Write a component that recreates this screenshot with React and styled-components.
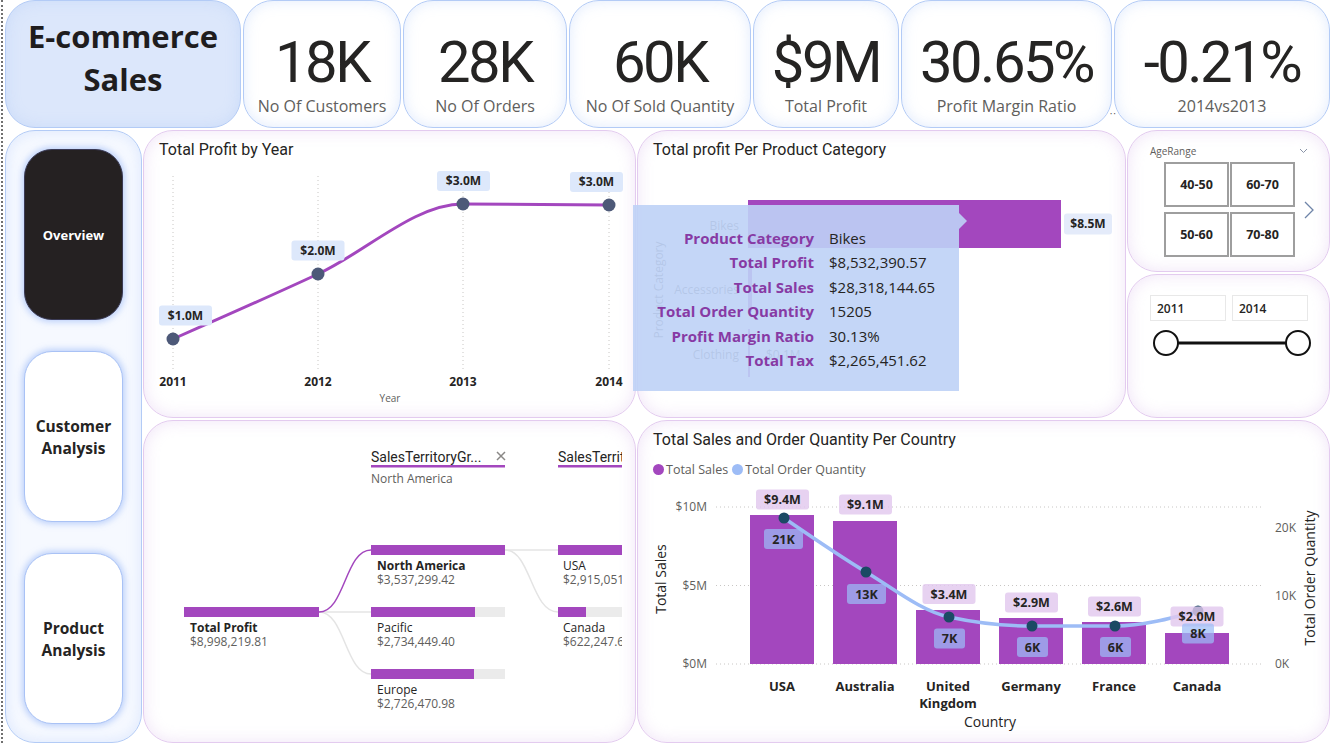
import React from "react";
import styled, { createGlobalStyle, css } from "styled-components";

const SEGOE = `"Open Sans", "Noto Sans", "Liberation Sans", sans-serif`;
const DIN = `Roboto, "Liberation Sans", sans-serif`;
const PURPLE = "#a347be";
const INK = "#252423";
const GRAY = "#605e5c";

const GlobalStyle = createGlobalStyle`
  html, body { margin: 0; padding: 0; background: #fff; }
  body { font-family: ${SEGOE}; color: ${INK}; overflow: hidden; }
  * { box-sizing: border-box; }
`;

const Page = styled.div`
  width: 1329px;
  height: 743px;
  margin-left: 1px;
  border-left: 2px dotted #707070;
  padding-left: 2px;
  display: flex;
  flex-direction: column;
  gap: 2px;
`;

const TopRow = styled.div`
  display: flex;
  gap: 2px;
  height: 128px;
`;

const blueCard = css`
  border: 1px solid #b3cbf6;
  border-radius: 30px;
  box-shadow: inset 0 0 14px rgba(170, 198, 248, 0.35);
`;

const TitleCard = styled.div`
  ${blueCard};
  width: 236px;
  background: #dce7fb;
  padding-top: 14px;
  text-align: center;
  font-family: ${SEGOE};
  font-weight: 700;
  font-size: 31px;
  line-height: 43px;
  color: #1f1d1e;
`;

const KpiCard = styled.div`
  ${blueCard};
  position: relative;
  width: ${(p) => p.$w}px;
  background: #fff;
  display: flex;
  flex-direction: column;
  align-items: center;
  padding-top: 32px;
  gap: 5px;
`;

const KpiValue = styled.div`
  font-family: ${DIN};
  font-size: 58px;
  line-height: 58px;
  letter-spacing: -2.5px;
  color: ${INK};
  white-space: nowrap;
`;

const KpiLabel = styled.div`
  font-family: ${SEGOE};
  font-size: 16px;
  line-height: 20px;
  color: ${GRAY};
  white-space: nowrap;
`;

const MoreDots = styled.span`
  position: absolute;
  right: -6px;
  bottom: 9px;
  font-size: 10px;
  line-height: 10px;
  letter-spacing: 1px;
  color: #605e5c;
`;

const Main = styled.div`
  display: grid;
  grid-template-columns: 137px 493px 489px 203px;
  grid-template-rows: 288px 323px;
  column-gap: 1px;
  row-gap: 2px;
`;

const NavPanel = styled.nav`
  ${blueCard};
  grid-column: 1;
  grid-row: 1 / 3;
  background: #f6f9ff;
  padding: 18px 0 0 18px;
  display: flex;
  flex-direction: column;
  gap: 31px;
`;

const NavButton = styled.div`
  width: 99px;
  height: 171px;
  border-radius: 28px;
  border: 1px solid ${(p) => (p.$active ? "#3a3a55" : "#a9c2f5")};
  background: ${(p) => (p.$active ? "#252122" : "#fff")};
  color: ${(p) => (p.$active ? "#fff" : INK)};
  box-shadow: 0 0 6px 2px rgba(140, 175, 245, 0.55);
  display: flex;
  align-items: center;
  justify-content: center;
  text-align: center;
  font-weight: 700;
  font-size: ${(p) => (p.$active ? 13 : 15.5)}px;
  line-height: 22px;
`;

const PinkCard = styled.section`
  position: relative;
  grid-column: ${(p) => p.$col};
  grid-row: ${(p) => p.$row};
  border: 1px solid #e3cbef;
  border-radius: 30px;
  background: #fff;
  box-shadow: inset 0 0 16px rgba(222, 196, 238, 0.45);
  display: flex;
  flex-direction: column;
  overflow: ${(p) => (p.$clip ? "hidden" : "visible")};
`;

const SideStack = styled.div`
  grid-column: 4;
  grid-row: 1;
  display: flex;
  flex-direction: column;
  gap: 2px;
`;

const SlicerCard = styled(PinkCard)`
  height: ${(p) => p.$h}px;
  flex: none;
`;

const ChartTitle = styled.h2`
  margin: 9px 0 0 15px;
  height: 20px;
  font-family: ${DIN};
  font-weight: 400;
  font-size: 16px;
  line-height: 20px;
  color: ${INK};
  white-space: nowrap;
`;

const ChartSvg = styled.svg`
  display: block;
  flex: none;
  font-family: ${SEGOE};
`;

const Legend = styled.div`
  margin: 10px 0 0 15px;
  height: 18px;
  display: flex;
  align-items: center;
  gap: 4px;
  font-size: 12.5px;
  color: ${GRAY};
`;

const LegendItem = styled.span`
  display: inline-flex;
  align-items: center;
  gap: 2px;
  &::before {
    content: "";
    width: 11px;
    height: 11px;
    border-radius: 50%;
    background: ${(p) => p.$color};
  }
`;

const Tooltip = styled.div`
  position: absolute;
  left: -5px;
  top: 74px;
  width: 326px;
  height: 186px;
  background: rgba(190, 210, 246, 0.9);
  display: grid;
  grid-template-columns: 181px 1fr;
  column-gap: 15px;
  align-content: start;
  padding-top: 21px;
  font-size: 15px;
  line-height: 24.4px;
  z-index: 3;
  &::after {
    content: "";
    position: absolute;
    right: -8px;
    top: 8px;
    border-style: solid;
    border-width: 8px 0 8px 8px;
    border-color: transparent transparent transparent rgba(190, 210, 246, 0.9);
  }
`;

const TipLabel = styled.div`
  text-align: right;
  font-weight: 700;
  color: #873aa4;
  white-space: nowrap;
`;

const TipValue = styled.div`
  color: ${INK};
  white-space: nowrap;
`;

const SlicerHead = styled.div`
  margin: 13px 21px 0 22px;
  height: 14px;
  display: flex;
  justify-content: space-between;
  align-items: center;
  font-size: 10px;
  line-height: 14px;
  color: ${GRAY};
`;

const SlicerBody = styled.div`
  margin: 4px 0 0 36px;
  display: flex;
  align-items: center;
  gap: 9px;
`;

const TileGrid = styled.div`
  display: grid;
  grid-template-columns: 65px 65px;
  grid-auto-rows: 45px;
  column-gap: 1px;
  row-gap: 5px;
`;

const Tile = styled.div`
  border: 2px solid #9e9e9e;
  background: #fff;
  display: flex;
  align-items: center;
  justify-content: center;
  font-weight: 700;
  font-size: 12.5px;
  color: ${INK};
`;

const RangeInputs = styled.div`
  margin: 20px 0 0 22px;
  display: flex;
  gap: 6px;
`;

const RangeBox = styled.div`
  width: 76px;
  height: 26px;
  border: 1px solid #e8e8e8;
  padding-left: 6px;
  display: flex;
  align-items: center;
  font-size: 12px;
  font-weight: 600;
  color: ${INK};
`;

const SliderSvg = styled.svg`
  display: block;
  margin: 8px 0 0 24px;
`;

function monotone(pts) {
  const n = pts.length;
  const h = [];
  const s = [];
  for (let i = 0; i < n - 1; i++) {
    h[i] = pts[i + 1][0] - pts[i][0];
    s[i] = (pts[i + 1][1] - pts[i][1]) / h[i];
  }
  const t = new Array(n).fill(0);
  for (let i = 1; i < n - 1; i++) {
    const s0 = s[i - 1];
    const s1 = s[i];
    const p = (s0 * h[i] + s1 * h[i - 1]) / (h[i - 1] + h[i]);
    t[i] = (Math.sign(s0) + Math.sign(s1)) * Math.min(Math.abs(s0), Math.abs(s1), 0.5 * Math.abs(p)) || 0;
  }
  t[0] = (3 * s[0] - t[1]) / 2;
  t[n - 1] = (3 * s[n - 2] - t[n - 2]) / 2;
  let d = `M${pts[0][0]},${pts[0][1]}`;
  for (let i = 0; i < n - 1; i++) {
    const [x0, y0] = pts[i];
    const [x1, y1] = pts[i + 1];
    const dx = h[i] / 3;
    d += ` C${x0 + dx},${y0 + t[i] * dx} ${x1 - dx},${y1 - t[i + 1] * dx} ${x1},${y1}`;
  }
  return d;
}

function DataLabel({ cx, cy, w, h = 20, text, fill, size = 12 }) {
  return (
    <g>
      <rect x={cx - w / 2} y={cy - h / 2} width={w} height={h} rx={3} fill={fill} />
      <text x={cx} y={cy + size * 0.36} textAnchor="middle" fontSize={size} fontWeight={700} fill={INK}>
        {text}
      </text>
    </g>
  );
}

function ProfitByYear() {
  const pts = [
    [173, 339],
    [318, 274],
    [463, 204],
    [609, 205],
  ];
  const labels = [
    { cx: 185.5, cy: 315.5, t: "$1.0M" },
    { cx: 318, cy: 250.5, t: "$2.0M" },
    { cx: 463.5, cy: 181, t: "$3.0M" },
    { cx: 596.5, cy: 182, t: "$3.0M" },
  ];
  const years = ["2011", "2012", "2013", "2014"];
  return (
    <ChartSvg width={491} height={257} viewBox="144 160 491 257">
      {pts.map(([x]) => (
        <line key={x} x1={x} x2={x} y1={176} y2={372} stroke="#c8c6c4" strokeDasharray="1 3" />
      ))}
      <path d={monotone(pts)} fill="none" stroke={PURPLE} strokeWidth={3} />
      {pts.map(([x, y]) => (
        <circle key={x} cx={x} cy={y} r={6.5} fill="#4d5978" />
      ))}
      {labels.map((l) => (
        <DataLabel key={l.cx} cx={l.cx} cy={l.cy} w={53} text={l.t} fill="#dde8fb" />
      ))}
      {pts.map(([x], i) => (
        <text key={x} x={x} y={386} textAnchor="middle" fontSize={12} fontWeight={700} fill={INK}>
          {years[i]}
        </text>
      ))}
      <text x={390} y={402} textAnchor="middle" fontSize={10} fill={GRAY}>
        Year
      </text>
    </ChartSvg>
  );
}

function ProfitByCategory() {
  return (
    <ChartSvg width={487} height={257} viewBox="638 160 487 257">
      <rect x={748} y={200} width={313} height={48} fill={PURPLE} />
      <rect x={748} y={264} width={4} height={48} fill={PURPLE} />
      <rect x={748} y={329} width={2} height={48} fill={PURPLE} />
      <text x={739} y={230} textAnchor="end" fontSize={12} fill={GRAY}>Bikes</text>
      <text x={739} y={294} textAnchor="end" fontSize={12} fill={GRAY}>Accessories</text>
      <text x={739} y={359} textAnchor="end" fontSize={12} fill={GRAY}>Clothing</text>
      <text x={766} y={359} fontSize={12} fill={GRAY}>$0.1M</text>
      <text x={663} y={290} transform="rotate(-90 663 290)" textAnchor="middle" fontSize={12} fill={GRAY}>
        Product Category
      </text>
      <DataLabel cx={1088} cy={224} w={48} h={21} text="$8.5M" fill="#e4ebfa" />
    </ChartSvg>
  );
}

function DecompTree() {
  const bar = (x, y, full, fillW, key) => (
    <g key={key}>
      <rect x={x} y={y} width={full} height={10} fill="#ebebeb" />
      <rect x={x} y={y} width={fillW} height={10} fill={PURPLE} />
    </g>
  );
  const node = (x, y, name, val, bold) => (
    <g key={name}>
      <text x={x} y={y} fontSize={12} fontWeight={bold ? 700 : 400} fill={INK}>{name}</text>
      <text x={x} y={y + 13.7} fontSize={12} fill={GRAY}>{val}</text>
    </g>
  );
  return (
    <ChartSvg width={491} height={321} viewBox="144 421 491 321">
      <defs>
        <clipPath id="treeClip">
          <rect x={144} y={421} width={478} height={321} />
        </clipPath>
      </defs>
      <g clipPath="url(#treeClip)">
        <path d="M319 612 L371 612" stroke="#e4e4e4" strokeWidth={1.5} fill="none" />
        <path d="M319 612 C345 612 345 674 371 674" stroke="#e4e4e4" strokeWidth={1.5} fill="none" />
        <path d="M319 612 C345 612 345 550 371 550" stroke={PURPLE} strokeWidth={1.5} fill="none" />
        <path d="M505 550 L558 550" stroke="#e4e4e4" strokeWidth={1.5} fill="none" />
        <path d="M505 550 C531 550 531 612 558 612" stroke="#e4e4e4" strokeWidth={1.5} fill="none" />

        {bar(184, 607, 135, 135, "root")}
        {node(190, 632, "Total Profit", "$8,998,219.81", true)}

        <text x={371} y={462} fontSize={14} fontFamily={DIN} fill={INK}>SalesTerritoryGr...</text>
        <path d="M497 452 L505 460 M505 452 L497 460" stroke="#8a8886" strokeWidth={1.5} />
        <rect x={371} y={465} width={134} height={2.5} fill={PURPLE} />
        <text x={371} y={483} fontSize={12} fill={GRAY}>North America</text>

        {bar(371, 545, 134, 134, "na")}
        {node(377, 570, "North America", "$3,537,299.42", true)}
        {bar(371, 607, 134, 104, "pa")}
        {node(377, 632, "Pacific", "$2,734,449.40")}
        {bar(371, 669, 134, 103, "eu")}
        {node(377, 694, "Europe", "$2,726,470.98")}

        <text x={558} y={462} fontSize={14} fontFamily={DIN} fill={INK}>SalesTerritoryCountry</text>
        <rect x={558} y={465} width={134} height={2.5} fill={PURPLE} />
        {bar(558, 545, 134, 134, "us")}
        {node(563, 570, "USA", "$2,915,051.78")}
        {bar(558, 607, 134, 28, "ca")}
        {node(563, 632, "Canada", "$622,247.64")}
      </g>
    </ChartSvg>
  );
}

const countries = [
  { n: ["USA"], x: 750, top: 515, s: "$9.4M", sx: 782.5, sy: 499.5, q: "21K", qx: 783.5, qy: 539, qw: 39, p: [784, 518] },
  { n: ["Australia"], x: 833, top: 521, s: "$9.1M", sx: 865.5, sy: 504.5, q: "13K", qx: 866.5, qy: 594, qw: 39, p: [866, 572] },
  { n: ["United", "Kingdom"], x: 916, top: 610, s: "$3.4M", sx: 949, sy: 594, q: "7K", qx: 949.5, qy: 638.5, qw: 31, p: [949, 617] },
  { n: ["Germany"], x: 999, top: 618, s: "$2.9M", sx: 1031.5, sy: 602.5, q: "6K", qx: 1032.5, qy: 647, qw: 31, p: [1032, 626] },
  { n: ["France"], x: 1082, top: 622, s: "$2.6M", sx: 1114.5, sy: 606.5, q: "6K", qx: 1115.5, qy: 647, qw: 31, p: [1115, 626] },
  { n: ["Canada"], x: 1165, top: 633, s: "$2.0M", sx: 1197, sy: 616.5, q: "8K", qx: 1198, qy: 633.5, qw: 32, p: [1198, 611] },
];

function SalesByCountry() {
  const grid = [507, 585.5, 664];
  const left = ["$10M", "$5M", "$0M"];
  const right = [
    [528, "20K"],
    [596, "10K"],
    [664, "0K"],
  ];
  return (
    <ChartSvg width={691} height={264} viewBox="638 478 691 264">
      {grid.map((y, i) => (
        <g key={y}>
          <line x1={716} x2={1262} y1={y} y2={y} stroke="#c8c6c4" strokeDasharray="1 3" />
          <text x={707} y={y + 4.3} textAnchor="end" fontSize={12} fill={GRAY}>{left[i]}</text>
        </g>
      ))}
      {right.map(([y, t]) => (
        <text key={t} x={1275} y={y + 4.3} fontSize={12} fill={GRAY}>{t}</text>
      ))}
      <text x={666} y={579} transform="rotate(-90 666 579)" textAnchor="middle" fontSize={14} fill={INK}>
        Total Sales
      </text>
      <text x={1315} y={578} transform="rotate(-90 1315 578)" textAnchor="middle" fontSize={14} fill={INK}>
        Total Order Quantity
      </text>
      {countries.map((c) => (
        <rect key={c.s} x={c.x} y={c.top} width={64} height={664 - c.top} fill={PURPLE} />
      ))}
      <path d={monotone(countries.map((c) => c.p))} fill="none" stroke="#9dbcf6" strokeWidth={3.5} />
      {countries.map((c) => (
        <circle key={c.s} cx={c.p[0]} cy={c.p[1]} r={5.5} fill="#1b4a64" />
      ))}
      {countries.map((c) => (
        <DataLabel key={c.s} cx={c.sx} cy={c.sy} w={53} text={c.s} fill="rgba(226,200,238,0.82)" size={12.5} />
      ))}
      {countries.map((c) => (
        <DataLabel key={c.q + c.qx} cx={c.qx} cy={c.qy} w={c.qw} text={c.q} fill="rgba(157,188,246,0.72)" size={12.5} />
      ))}
      {countries.map((c) =>
        c.n.map((line, i) => (
          <text key={line} x={c.x + 32} y={690.5 + i * 17.5} textAnchor="middle" fontSize={13} fontWeight={700} fill={INK}>
            {line}
          </text>
        ))
      )}
      <text x={990} y={727} textAnchor="middle" fontSize={14} fill={INK}>Country</text>
    </ChartSvg>
  );
}

const kpis = [
  { w: 158, v: "18K", l: "No Of Customers" },
  { w: 164, v: "28K", l: "No Of Orders" },
  { w: 182, v: "60K", l: "No Of Sold Quantity" },
  { w: 146, v: "$9M", l: "Total Profit" },
  { w: 211, v: "30.65%", l: "Profit Margin Ratio", more: true },
  { w: 216, v: "-0.21%", l: "2014vs2013" },
];

const tooltipRows = [
  ["Product Category", "Bikes"],
  ["Total Profit", "$8,532,390.57"],
  ["Total Sales", "$28,318,144.65"],
  ["Total Order Quantity", "15205"],
  ["Profit Margin Ratio", "30.13%"],
  ["Total Tax", "$2,265,451.62"],
];

export default function App() {
  return (
    <>
      <GlobalStyle />
      <Page>
        <TopRow>
          <TitleCard>
            E-commerce
            <br />
            Sales
          </TitleCard>
          {kpis.map((k) => (
            <KpiCard key={k.l} $w={k.w}>
              <KpiValue>{k.v}</KpiValue>
              <KpiLabel>{k.l}</KpiLabel>
              {k.more && <MoreDots>··</MoreDots>}
            </KpiCard>
          ))}
        </TopRow>
        <Main>
          <NavPanel>
            <NavButton $active>Overview</NavButton>
            <NavButton>
              Customer
              <br />
              Analysis
            </NavButton>
            <NavButton>
              Product
              <br />
              Analysis
            </NavButton>
          </NavPanel>

          <PinkCard $col={2} $row={1} $clip>
            <ChartTitle>Total Profit by Year</ChartTitle>
            <ProfitByYear />
          </PinkCard>

          <PinkCard $col={3} $row={1}>
            <ChartTitle>Total profit Per Product Category</ChartTitle>
            <ProfitByCategory />
            <Tooltip>
              {tooltipRows.map(([a, b]) => (
                <React.Fragment key={a}>
                  <TipLabel>{a}</TipLabel>
                  <TipValue>{b}</TipValue>
                </React.Fragment>
              ))}
            </Tooltip>
          </PinkCard>

          <SideStack>
            <SlicerCard $h={142}>
              <SlicerHead>
                <span>AgeRange</span>
                <svg width="9" height="6" viewBox="0 0 9 6">
                  <path d="M1 1 L4.5 4.5 L8 1" fill="none" stroke="#8a94a8" strokeWidth="1" />
                </svg>
              </SlicerHead>
              <SlicerBody>
                <TileGrid>
                  <Tile>40-50</Tile>
                  <Tile>60-70</Tile>
                  <Tile>50-60</Tile>
                  <Tile>70-80</Tile>
                </TileGrid>
                <svg width="10" height="18" viewBox="0 0 10 18">
                  <path d="M1 1 L9 9 L1 17" fill="none" stroke="#6f84a8" strokeWidth="1.3" />
                </svg>
              </SlicerBody>
            </SlicerCard>
            <SlicerCard $h={144}>
              <RangeInputs>
                <RangeBox>2011</RangeBox>
                <RangeBox>2014</RangeBox>
              </RangeInputs>
              <SliderSvg width="162" height="28" viewBox="0 0 162 28">
                <line x1="14" x2="146" y1="14" y2="14" stroke="#111" strokeWidth="3" />
                <circle cx="14" cy="14" r="12" fill="#fff" stroke="#111" strokeWidth="2" />
                <circle cx="146" cy="14" r="12" fill="#fff" stroke="#111" strokeWidth="2" />
              </SliderSvg>
            </SlicerCard>
          </SideStack>

          <PinkCard $col={2} $row={2} $clip>
            <DecompTree />
          </PinkCard>

          <PinkCard $col="3 / 5" $row={2} $clip>
            <ChartTitle>Total Sales and Order Quantity Per Country</ChartTitle>
            <Legend>
              <LegendItem $color={PURPLE}>Total Sales</LegendItem>
              <LegendItem $color="#9dbcf6">Total Order Quantity</LegendItem>
            </Legend>
            <SalesByCountry />
          </PinkCard>
        </Main>
      </Page>
    </>
  );
}
